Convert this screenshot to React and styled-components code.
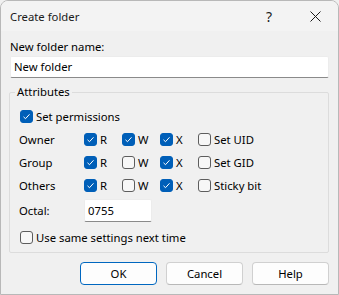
import { Fragment } from "react";
import styled, { createGlobalStyle } from "styled-components";

const Global = createGlobalStyle`
  html, body {
    margin: 0;
    padding: 0;
    background: #f0f0f0;
  }
  * {
    box-sizing: border-box;
  }
`;

const Window = styled.div`
  width: 339px;
  height: 295px;
  border: 1px solid #b8b8b8;
  border-radius: 8px 8px 0 0;
  background: #f0f0f0;
  font-family: "Noto Sans", "Open Sans", sans-serif;
  font-size: 11.3px;
  color: #000;
  overflow: hidden;
  display: flex;
  flex-direction: column;
`;
const TitleBar = styled.div`
  height: 30px;
  background: #f3f3f3;
  display: flex;
  align-items: center;
  padding-left: 9px;
  flex: 0 0 auto;
`;
const Title = styled.div`
  flex: 1;
  color: #1a1a1a;
  padding-top: 1px;
`;
const TitleButton = styled.div`
  width: 46px;
  height: 30px;
  display: flex;
  align-items: center;
  justify-content: center;
  font-size: ${(p) => p.size || 12}px;
  color: #1a1a1a;
`;
const Body = styled.div`
  padding: 7px 9px 9px 9px;
  display: flex;
  flex-direction: column;
`;
const Label = styled.div`
  height: 18px;
  line-height: 18px;
`;
const TextInput = styled.div`
  height: ${(p) => p.height || 22}px;
  background: #fff;
  border: 1px solid #ececec;
  border-bottom-color: #8a8a8a;
  border-radius: 2px;
  padding: 0 3px;
  line-height: ${(p) => (p.height || 22) - 2}px;
  width: ${(p) => p.width || "auto"};
`;
const Group = styled.fieldset`
  margin: 6px 0 0 -1px;
  padding: 5px 0 1px 5px;
  border: 1px solid #dcdcdc;
  border-radius: 2px;
  min-width: 0;
`;
const Legend = styled.legend`
  padding: 0 2px;
  line-height: 16px;
  height: 16px;
`;
const Grid = styled.div`
  display: grid;
  grid-template-columns: 66px 38px 38px 38px 1fr;
  grid-template-rows: repeat(4, 23px) 27px 27px;
  align-items: center;
  padding-left: 3px;
`;
const Wide = styled.div`
  grid-column: 1 / -1;
  display: flex;
  align-items: center;
  padding-left: ${(p) => p.$indent || 0}px;
`;
const RowLabel = styled.div`
  padding-left: 1px;
`;
const OctalRow = styled.div`
  grid-column: 1 / -1;
  display: grid;
  grid-template-columns: 66px 68px;
  align-items: center;
`;
const Check = styled.label`
  display: flex;
  align-items: center;
  gap: 3px;
  white-space: nowrap;
`;
const Box = styled.span`
  width: 13px;
  height: 13px;
  border-radius: 3px;
  flex: 0 0 auto;
  display: flex;
  align-items: center;
  justify-content: center;
  background: ${(p) => (p.$on ? "#005fb8" : "#f7f7f7")};
  border: 1px solid ${(p) => (p.$on ? "#005fb8" : "#5d5d5d")};
`;
const Buttons = styled.div`
  display: flex;
  justify-content: flex-end;
  gap: 9px;
  margin-top: 9px;
`;
const Button = styled.div`
  width: 77px;
  height: 23px;
  border-radius: 4px;
  background: #fdfdfd;
  border: 1px solid ${(p) => (p.$primary ? "#0067c0" : "#d0d0d0")};
  border-bottom-color: ${(p) => (p.$primary ? "#0067c0" : "#b8b8b8")};
  display: flex;
  align-items: center;
  justify-content: center;
`;

function CheckBox({ on, children }) {
  return (
    <Check>
      <Box $on={on}>
        {on && (
          <svg width="9" height="9" viewBox="0 0 9 9">
            <path d="M1.5 4.8 L3.5 6.7 L7.5 2.3" fill="none" stroke="#fff" strokeWidth="1" />
          </svg>
        )}
      </Box>
      {children}
    </Check>
  );
}

const rows = [
  { name: "Owner", r: true, w: true, x: true, extra: "Set UID" },
  { name: "Group", r: true, w: false, x: true, extra: "Set GID" },
  { name: "Others", r: true, w: false, x: true, extra: "Sticky bit" },
];

export default function App() {
  return (
    <>
      <Global />
      <Window>
        <TitleBar>
          <Title>Create folder</Title>
          <TitleButton size={14}>?</TitleButton>
          <TitleButton>
            <svg width="11" height="11" viewBox="0 0 11 11">
              <path d="M0.5 0.5 L10.5 10.5 M10.5 0.5 L0.5 10.5" stroke="#1a1a1a" strokeWidth="1" />
            </svg>
          </TitleButton>
        </TitleBar>
        <Body>
          <Label>New folder name:</Label>
          <TextInput>New folder</TextInput>
          <Group>
            <Legend>Attributes</Legend>
            <Grid>
              <Wide $indent={2}>
                <CheckBox on>Set permissions</CheckBox>
              </Wide>
              {rows.map((row) => (
                <Fragment key={row.name}>
                  <RowLabel>{row.name}</RowLabel>
                  <CheckBox on={row.r}>R</CheckBox>
                  <CheckBox on={row.w}>W</CheckBox>
                  <CheckBox on={row.x}>X</CheckBox>
                  <CheckBox on={false}>{row.extra}</CheckBox>
                </Fragment>
              ))}
              <OctalRow>
                <RowLabel>Octal:</RowLabel>
                <TextInput width="68px" height={23}>0755</TextInput>
              </OctalRow>
              <Wide $indent={2}>
                <CheckBox on={false}>Use same settings next time</CheckBox>
              </Wide>
            </Grid>
          </Group>
          <Buttons>
            <Button $primary>OK</Button>
            <Button>Cancel</Button>
            <Button>Help</Button>
          </Buttons>
        </Body>
      </Window>
    </>
  );
}
